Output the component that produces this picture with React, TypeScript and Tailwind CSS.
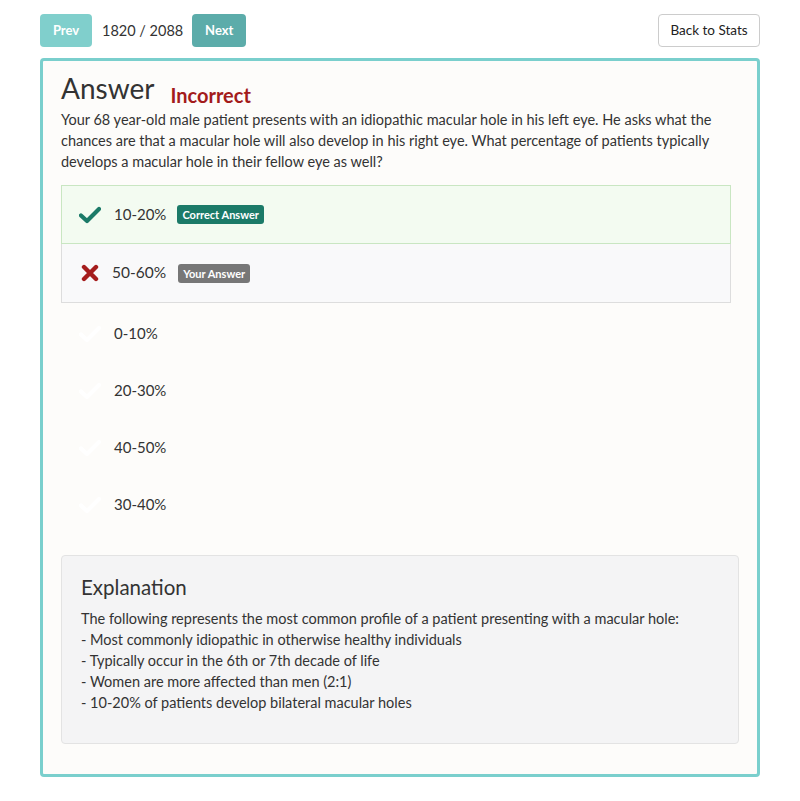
import React from "react";

function Check() {
  return (
    <svg width="22" height="18" viewBox="0 0 22 18">
      <path d="M2 9.5 L8 15 L20 3" fill="none" stroke="#1b7a68" strokeWidth="4.2" strokeLinecap="round" strokeLinejoin="round" />
    </svg>
  );
}
function Cross() {
  return (
    <svg width="18" height="18" viewBox="0 0 18 18">
      <path d="M3 3 L15 15 M15 3 L3 15" fill="none" stroke="#a51d1d" strokeWidth="4.4" strokeLinecap="round" />
    </svg>
  );
}
function FaintCheck() {
  return (
    <svg width="22" height="18" viewBox="0 0 22 18">
      <path d="M2 9.5 L8 15 L20 3" fill="none" stroke="#ffffff" strokeWidth="4.2" strokeLinecap="round" strokeLinejoin="round" />
    </svg>
  );
}

export default function App() {
  const others = ["0-10%", "20-30%", "40-50%", "30-40%"];
  const expl = [
    "The following represents the most common profile of a patient presenting with a macular hole:",
    "- Most commonly idiopathic in otherwise healthy individuals",
    "- Typically occur in the 6th or 7th decade of life",
    "- Women are more affected than men (2:1)",
    "- 10-20% of patients develop bilateral macular holes",
  ];
  return (
    <div className="w-[800px] h-[801px] bg-white text-[#333] font-['Lato',sans-serif]">
      <div className="px-[40px] pt-[14px]">
        <div className="flex items-center h-[33px]">
          <button className="h-[33px] w-[52px] rounded-[4px] bg-[#80cfcc] text-white text-[13px] font-bold">Prev</button>
          <span className="ml-[10px] text-[14.5px] text-[#333]">1820 / 2088</span>
          <button className="ml-[9px] h-[33px] w-[54px] rounded-[4px] bg-[#5cacaa] text-white text-[13px] font-bold">Next</button>
          <div className="flex-1" />
          <button className="h-[33px] w-[102px] rounded-[4px] border border-[#cccccc] bg-white text-[13.5px] text-[#222]">Back to Stats</button>
        </div>
        <div className="mt-[11px] h-[719px] rounded-[4px] border-[3px] border-[#7acfcd] bg-[#fdfcfa] px-[18px] pt-[8px]">
          <div className="flex items-end">
            <h1 className="text-[28px] leading-[38px] text-[#333]">Answer</h1>
            <span className="ml-[16px] mb-[-3px] text-[20px] font-bold text-[#a31b1b]">Incorrect</span>
          </div>
          <p className="mt-[2px] text-[14.5px] leading-[21px] text-[#333]">
            Your 68 year-old male patient presents with an idiopathic macular hole in his left eye. He asks what the chances are that a macular hole will also develop in his right eye. What percentage of patients typically develops a macular hole in their fellow eye as well?
          </p>
          <div className="mt-[13px] mr-[8px]">
            <div className="flex items-center h-[59px] border border-[#c9e6c2] bg-[#f3fbf1] pl-[17px]">
              <Check />
              <span className="ml-[13px] text-[15px]">10-20%</span>
              <span className="ml-[11px] rounded-[3px] bg-[#1b7a68] px-[5px] py-[2px] text-[11px] font-bold leading-[15px] text-white">Correct Answer</span>
            </div>
            <div className="flex items-center h-[59px] border border-t-0 border-[#dddddd] bg-[#f9f9fa] pl-[19px]">
              <Cross />
              <span className="ml-[13px] text-[15.5px]">50-60%</span>
              <span className="ml-[12px] rounded-[3px] bg-[#777777] px-[5px] py-[2px] text-[11px] font-bold leading-[15px] text-white">Your Answer</span>
            </div>
            <div className="pt-[2px]">
              {others.map((o) => (
                <div key={o} className="flex items-center h-[57px] pl-[18px]">
                  <FaintCheck />
                  <span className="ml-[13px] text-[15px]">{o}</span>
                </div>
              ))}
            </div>
          </div>
          <div className="mt-[22px] h-[189px] rounded-[4px] border border-[#e3e3e3] bg-[#f4f4f5] px-[19px] pt-[16px]">
            <h2 className="text-[20.5px] leading-[30px] text-[#333]">Explanation</h2>
            <div className="mt-[6px] text-[14.5px] leading-[21px] text-[#333]">
              {expl.map((l) => (
                <div key={l}>{l}</div>
              ))}
            </div>
          </div>
        </div>
      </div>
    </div>
  );
}
